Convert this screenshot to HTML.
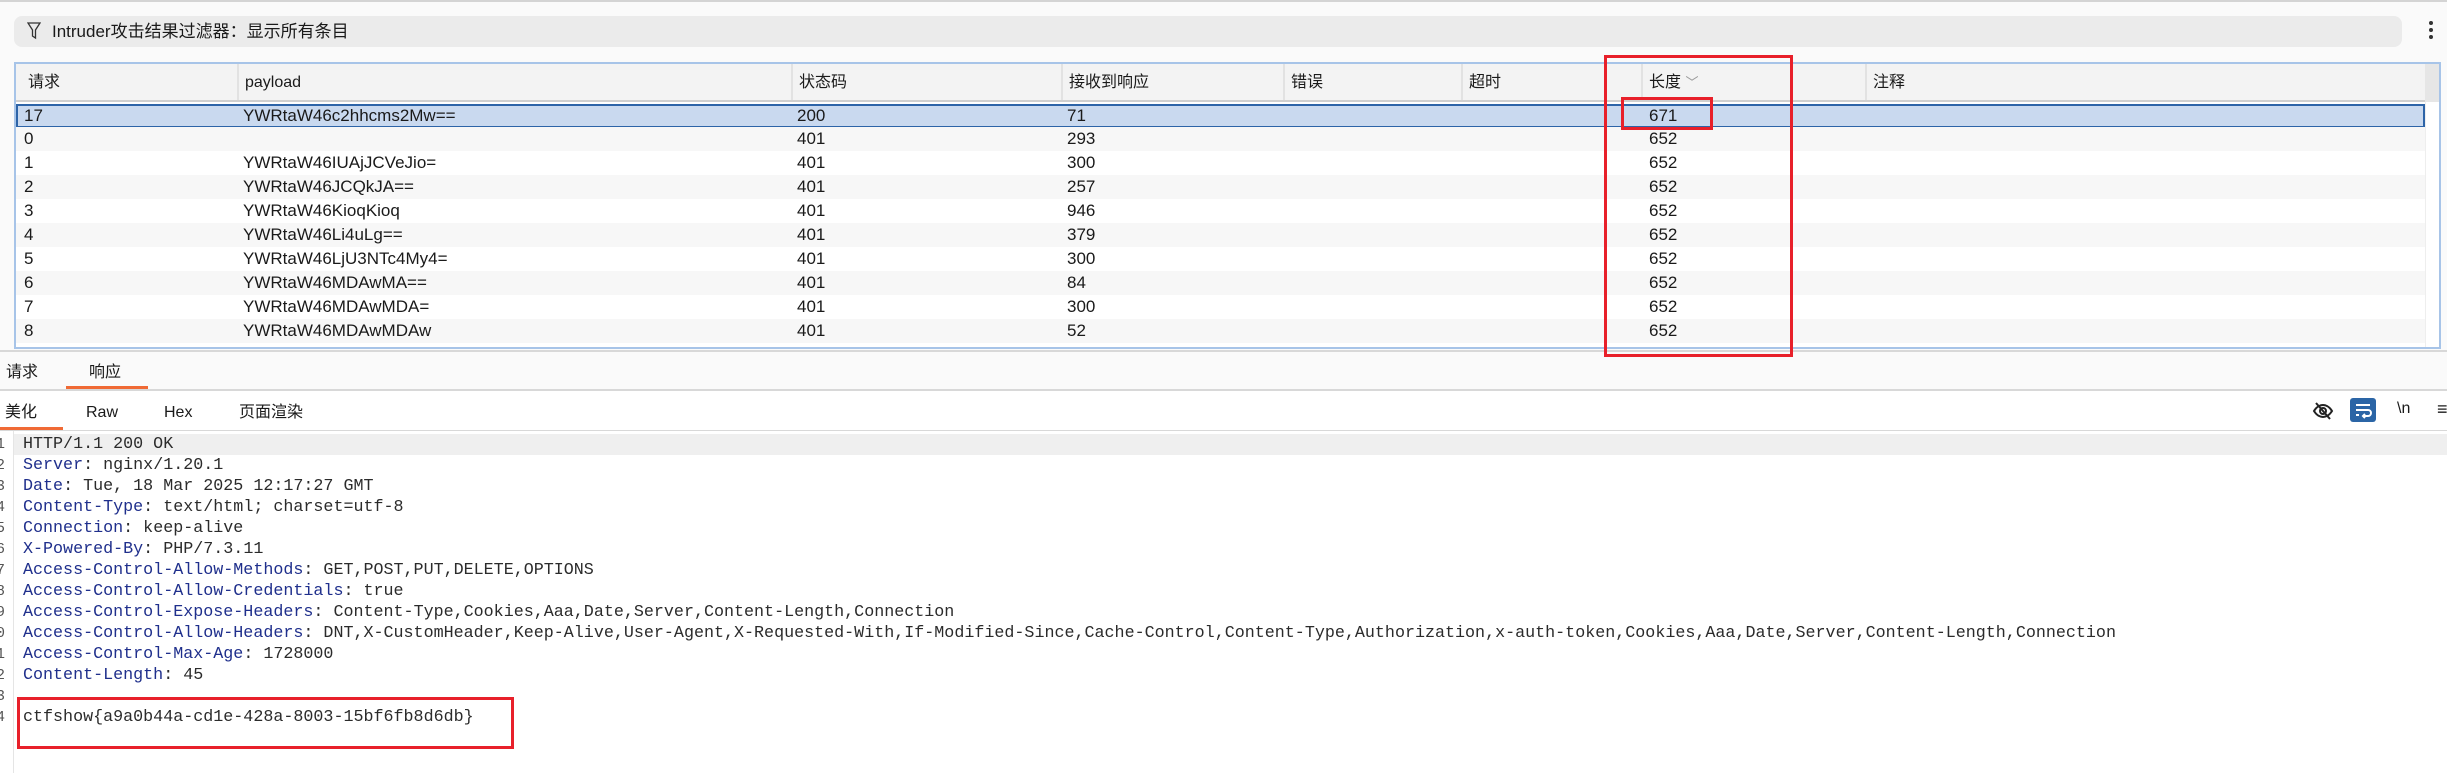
<!DOCTYPE html>
<html><head><meta charset="utf-8"><style>
*{margin:0;padding:0;box-sizing:border-box}
body{width:2447px;height:773px;overflow:hidden;background:#fff;font-family:"Liberation Sans","Noto Sans CJK SC",sans-serif;color:#1a1a1a;position:relative}
.abs{position:absolute}
#top{left:0;top:0;width:2447px;height:390px;background:#fafafa;border-top:2px solid #d4d4d4}
#filter{left:14px;top:16px;width:2388px;height:31px;background:#ebebeb;border-radius:8px;font-size:17px;line-height:31px;padding-left:38px}
#table{left:14px;top:62px;width:2427px;height:287px;border:2px solid #a7c4e8;background:#fff;overflow:hidden}
.hdr{position:absolute;left:0;top:0;width:2409px;height:38px;background:#f3f3f3;border-bottom:2px solid #cfcfcf}
.hc{position:absolute;top:0;height:36px;line-height:38px;font-size:16px;padding-left:6px;border-left:2px solid #e2e2e2}
.row{position:absolute;left:0;width:2409px;height:24px;font-size:17px;line-height:24px}
.row span{position:absolute;top:0}
.sel{background:#c9d9ef;border:2px solid #2d64a8;line-height:20px}
.g{background:#f7f7f7}
.tab{font-size:16px;top:362px;line-height:22px;height:22px}
pre{position:absolute;left:23px;top:434px;font-family:"Liberation Mono",monospace;font-size:16.7px;line-height:21px;color:#2b2b2b}
.k{color:#1f2f8c}
.ln{position:absolute;left:-4px;font-family:"Liberation Mono",monospace;font-size:15px;color:#555;width:10px}
</style></head><body>
<div id="top" class="abs"></div>
<div id="filter" class="abs">Intruder攻击结果过滤器：显示所有条目</div>
<svg class="abs" style="left:27px;top:22px" width="14" height="18" viewBox="0 0 14 18"><path d="M1 1h12L8.5 8v8L5.5 14V8z" fill="none" stroke="#333" stroke-width="1.3"/></svg>
<div class="abs" style="left:2429px;top:21px;width:4px;font-size:0">
<div style="width:4px;height:4px;background:#333;border-radius:2px;margin-bottom:3px"></div><div style="width:4px;height:4px;background:#333;border-radius:2px;margin-bottom:3px"></div><div style="width:4px;height:4px;background:#333;border-radius:2px"></div></div>
<div id="table" class="abs">
<div class="hdr">
<div class="hc" style="left:0;border:none;padding-left:12px">请求</div>
<div class="hc" style="left:221px">payload</div>
<div class="hc" style="left:775px">状态码</div>
<div class="hc" style="left:1045px">接收到响应</div>
<div class="hc" style="left:1267px">错误</div>
<div class="hc" style="left:1445px">超时</div>
<div class="hc" style="left:1625px">长度 <span style="color:#999;font-size:13px">﹀</span></div>
<div class="hc" style="left:1849px">注释</div>
</div>
<div class="abs" style="left:2409px;top:0;width:16px;height:285px;background:#fff;border-left:1px solid #eee"></div>
<div class="abs" style="left:2409px;top:0;width:16px;height:38px;background:#e6e6e6"></div>
<div class="row sel" style="top:40px"><span style="left:6px">17</span><span style="left:225px">YWRtaW46c2hhcms2Mw==</span><span style="left:779px">200</span><span style="left:1049px">71</span><span style="left:1631px">671</span></div>
<div class="row g" style="top:63px"><span style="left:8px">0</span><span style="left:781px">401</span><span style="left:1051px">293</span><span style="left:1633px">652</span></div>
<div class="row" style="top:87px"><span style="left:8px">1</span><span style="left:227px">YWRtaW46IUAjJCVeJio=</span><span style="left:781px">401</span><span style="left:1051px">300</span><span style="left:1633px">652</span></div>
<div class="row g" style="top:111px"><span style="left:8px">2</span><span style="left:227px">YWRtaW46JCQkJA==</span><span style="left:781px">401</span><span style="left:1051px">257</span><span style="left:1633px">652</span></div>
<div class="row" style="top:135px"><span style="left:8px">3</span><span style="left:227px">YWRtaW46KioqKioq</span><span style="left:781px">401</span><span style="left:1051px">946</span><span style="left:1633px">652</span></div>
<div class="row g" style="top:159px"><span style="left:8px">4</span><span style="left:227px">YWRtaW46Li4uLg==</span><span style="left:781px">401</span><span style="left:1051px">379</span><span style="left:1633px">652</span></div>
<div class="row" style="top:183px"><span style="left:8px">5</span><span style="left:227px">YWRtaW46LjU3NTc4My4=</span><span style="left:781px">401</span><span style="left:1051px">300</span><span style="left:1633px">652</span></div>
<div class="row g" style="top:207px"><span style="left:8px">6</span><span style="left:227px">YWRtaW46MDAwMA==</span><span style="left:781px">401</span><span style="left:1051px">84</span><span style="left:1633px">652</span></div>
<div class="row" style="top:231px"><span style="left:8px">7</span><span style="left:227px">YWRtaW46MDAwMDA=</span><span style="left:781px">401</span><span style="left:1051px">300</span><span style="left:1633px">652</span></div>
<div class="row g" style="top:255px"><span style="left:8px">8</span><span style="left:227px">YWRtaW46MDAwMDAw</span><span style="left:781px">401</span><span style="left:1051px">52</span><span style="left:1633px">652</span></div>
</div>
<div class="abs" style="left:0;top:350px;width:2447px;height:2px;background:#d8d8d8"></div>
<div class="abs tab" style="left:6px">请求</div>
<div class="abs tab" style="left:89px">响应</div>
<div class="abs" style="left:66px;top:386px;width:82px;height:3px;background:#f06a35"></div>
<div class="abs" style="left:0;top:389px;width:2447px;height:2px;background:#d8d8d8"></div>
<div class="abs tab" style="left:5px;top:402px">美化</div>
<div class="abs tab" style="left:86px;top:402px">Raw</div>
<div class="abs tab" style="left:164px;top:402px">Hex</div>
<div class="abs tab" style="left:239px;top:402px">页面渲染</div>
<div class="abs" style="left:0;top:427px;width:63px;height:3px;background:#f06a35"></div>
<div class="abs" style="left:0;top:430px;width:2447px;height:1px;background:#d8d8d8"></div>
<svg class="abs" style="left:2312px;top:401px" width="22" height="20" viewBox="0 0 22 20"><path d="M2 10C5 5 9 4 11 4s6 1 9 6c-3 5-7 6-9 6s-6-1-9-6z" fill="none" stroke="#222" stroke-width="2"/><circle cx="11" cy="10" r="3" fill="none" stroke="#222" stroke-width="2"/><path d="M4 2l14 16" stroke="#222" stroke-width="2"/></svg>
<div class="abs" style="left:2350px;top:398px;width:26px;height:24px;background:#2b65a6;border-radius:3px"></div>
<svg class="abs" style="left:2350px;top:398px" width="26" height="24" viewBox="0 0 26 24"><path d="M6 7h14M6 12h12a3 3 0 010 6h-5m2-2l-2 2 2 2M6 17h3" fill="none" stroke="#fff" stroke-width="2"/></svg>
<div class="abs" style="left:2397px;top:400px;font-size:16px">\n</div>
<div class="abs" style="left:2437px;top:399px;font-size:18px">≡</div>
<div class="abs" style="left:13px;top:431px;width:1px;height:342px;background:#e5e5e5"></div>
<div class="abs" style="left:14px;top:434px;width:2433px;height:21px;background:#efefef"></div>
<div class="ln" style="top:436px">1</div><div class="ln" style="top:457px">2</div><div class="ln" style="top:478px">3</div><div class="ln" style="top:499px">4</div><div class="ln" style="top:520px">5</div><div class="ln" style="top:541px">6</div><div class="ln" style="top:562px">7</div><div class="ln" style="top:583px">8</div><div class="ln" style="top:604px">9</div><div class="ln" style="top:625px">0</div><div class="ln" style="top:646px">1</div><div class="ln" style="top:667px">2</div><div class="ln" style="top:688px">3</div><div class="ln" style="top:709px">4</div>
<pre>HTTP/1.1 200 OK
<span class="k">Server</span>: nginx/1.20.1
<span class="k">Date</span>: Tue, 18 Mar 2025 12:17:27 GMT
<span class="k">Content-Type</span>: text/html; charset=utf-8
<span class="k">Connection</span>: keep-alive
<span class="k">X-Powered-By</span>: PHP/7.3.11
<span class="k">Access-Control-Allow-Methods</span>: GET,POST,PUT,DELETE,OPTIONS
<span class="k">Access-Control-Allow-Credentials</span>: true
<span class="k">Access-Control-Expose-Headers</span>: Content-Type,Cookies,Aaa,Date,Server,Content-Length,Connection
<span class="k">Access-Control-Allow-Headers</span>: DNT,X-CustomHeader,Keep-Alive,User-Agent,X-Requested-With,If-Modified-Since,Cache-Control,Content-Type,Authorization,x-auth-token,Cookies,Aaa,Date,Server,Content-Length,Connection
<span class="k">Access-Control-Max-Age</span>: 1728000
<span class="k">Content-Length</span>: 45

ctfshow{a9a0b44a-cd1e-428a-8003-15bf6fb8d6db}</pre>
<div class="abs" style="left:1604px;top:55px;width:189px;height:302px;border:3px solid #e8202a"></div>
<div class="abs" style="left:1621px;top:97px;width:92px;height:33px;border:3px solid #e8202a"></div>
<div class="abs" style="left:17px;top:697px;width:497px;height:52px;border:3px solid #e8202a"></div>
</body></html>
